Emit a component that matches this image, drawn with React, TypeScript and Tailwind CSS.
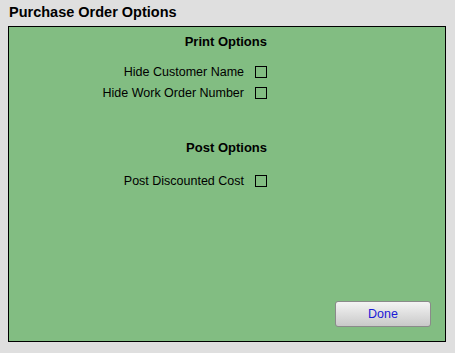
export default function App() {
  return (
    <div className="w-[455px] h-[353px] bg-[#dfdfdf] flex flex-col font-['Liberation_Sans',Arial,sans-serif] text-black">
      <div className="h-[26px] pl-[9px] pt-[4px] text-[14.5px] font-bold leading-[17px]">Purchase Order Options</div>
      <div className="mx-[8px] w-[438px] h-[316px] border border-black bg-[#82bd82] flex flex-col">
        <div className="w-[258px] flex flex-col items-end text-[12.5px] pt-[7px]">
          <div className="font-bold leading-[16px] text-[13px]">Print Options</div>
          <div className="mt-[16px] flex flex-col items-end gap-[9px]">
            <OptionRow label="Hide Customer Name" />
            <OptionRow label="Hide Work Order Number" />
          </div>
          <div className="mt-[41px] font-bold leading-[16px] text-[13px]">Post Options</div>
          <div className="mt-[19px]">
            <OptionRow label="Post Discounted Cost" />
          </div>
        </div>
        <div className="mt-auto flex justify-end pr-[14px] pb-[14px]">
          <button className="w-[96px] h-[26px] rounded-[3px] border border-[#8a8a8a] bg-gradient-to-b from-[#f4f4f4] to-[#c9c9c9] text-[12.5px] text-[#1a1ad6]">
            Done
          </button>
        </div>
      </div>
    </div>
  );
}

function OptionRow({ label }: { label: string }) {
  return (
    <div className="flex items-center gap-[11px] h-[12px]">
      <span className="leading-[14px]">{label}</span>
      <span className="w-[12px] h-[12px] border border-black" />
    </div>
  );
}
